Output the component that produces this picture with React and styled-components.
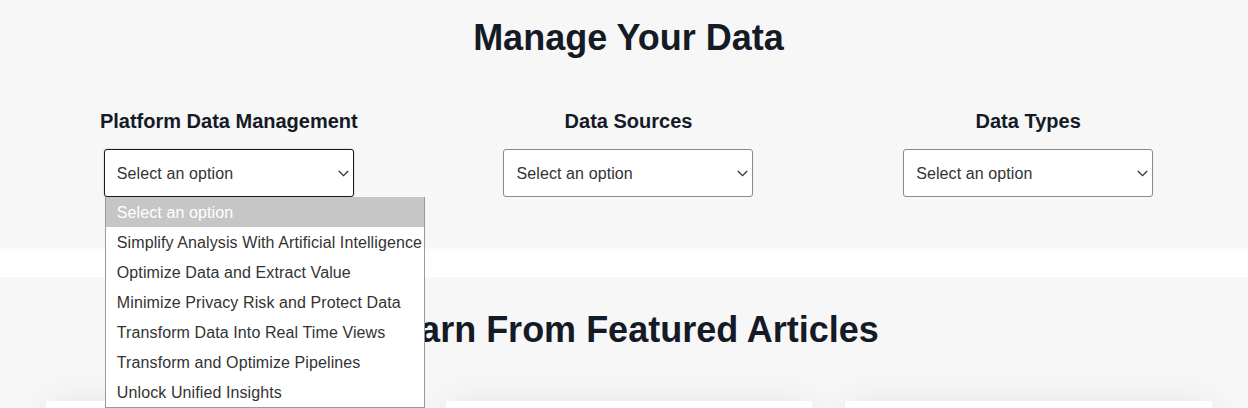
import React from "react";
import styled, { createGlobalStyle } from "styled-components";

const GlobalStyle = createGlobalStyle`
  html, body { margin: 0; padding: 0; background: #ffffff; }
  body { font-family: "Liberation Sans", Arial, sans-serif; }
  * { box-sizing: border-box; }
`;

const Page = styled.div`
  width: 100%;
  min-height: 408px;
  background: #ffffff;
  overflow: hidden;
`;

const Section = styled.section`
  background: #f7f7f7;
  padding: ${(p) => p.$pad};
  box-shadow: ${(p) => (p.$shadow ? "0 2px 4px rgba(0,0,0,0.035)" : "none")};
  position: relative;
  z-index: ${(p) => (p.$top ? 2 : 1)};
`;

const Gap = styled.div`
  height: 30px;
  background: #ffffff;
`;

const Title = styled.h2`
  margin: 0;
  text-align: center;
  font-size: 36px;
  font-weight: 700;
  line-height: normal;
  color: #141a26;
`;

const FilterGrid = styled.div`
  display: grid;
  grid-template-columns: repeat(3, 1fr);
  margin-top: 51px;
`;

const FilterColumn = styled.div`
  display: flex;
  flex-direction: column;
  align-items: center;
`;

const Label = styled.label`
  font-size: 20px;
  font-weight: 700;
  line-height: 23px;
  color: #141a26;
  margin-bottom: 16px;
`;

const SelectWrap = styled.div`
  position: relative;
  width: 250px;
  height: 48px;
`;

const Select = styled.select`
  appearance: none;
  -webkit-appearance: none;
  width: 100%;
  height: 100%;
  margin: 0;
  padding: 0 28px 0 12px;
  font-family: "Liberation Sans", Arial, sans-serif;
  font-size: 16px;
  letter-spacing: 0.1px;
  color: #333333;
  background: #ffffff;
  border: 1px solid ${(p) => (p.$open ? "#1a1a1a" : "#8a8a8a")};
  border-radius: 3px;
  box-shadow: ${(p) => (p.$open ? "0 0 2px rgba(0,0,0,0.25)" : "none")};
  outline: none;
`;

const Chevron = styled.svg`
  position: absolute;
  right: 5px;
  top: 21px;
  width: 11px;
  height: 7px;
  pointer-events: none;
`;

const OptionList = styled.ul`
  position: absolute;
  left: 1px;
  top: 48px;
  width: 320px;
  margin: 0;
  padding: 0;
  list-style: none;
  background: #ffffff;
  border: 1px solid #9a9a9a;
  border-top: none;
  z-index: 10;
`;

const OptionItem = styled.li`
  height: 30px;
  line-height: 32px;
  padding: 0 0 0 11px;
  font-size: 16px;
  letter-spacing: 0.1px;
  white-space: nowrap;
  overflow: hidden;
  color: ${(p) => (p.$active ? "#ffffff" : "#333333")};
  background: ${(p) => (p.$active ? "#c6c6c6" : "#ffffff")};
`;

const CardGrid = styled.div`
  display: grid;
  grid-template-columns: repeat(3, 1fr);
  gap: 33px;
  padding: 0 16px 0 17px;
  margin-top: 50px;
`;

const Card = styled.div`
  height: 220px;
  background: #ffffff;
  box-shadow: 0 0 32px rgba(0, 0, 0, 0.07);
`;

const options = [
  "Select an option",
  "Simplify Analysis With Artificial Intelligence",
  "Optimize Data and Extract Value",
  "Minimize Privacy Risk and Protect Data",
  "Transform Data Into Real Time Views",
  "Transform and Optimize Pipelines",
  "Unlock Unified Insights",
];

const filters = [
  { label: "Platform Data Management", open: true },
  { label: "Data Sources", open: false },
  { label: "Data Types", open: false },
];

function ChevronIcon() {
  return (
    <Chevron viewBox="0 0 11 7" fill="none">
      <path d="M0.8 1 L5.5 5.7 L10.2 1" stroke="#333333" strokeWidth="1.3" />
    </Chevron>
  );
}

export default function App() {
  return (
    <Page>
      <GlobalStyle />
      <Section $pad="17px 20px 50px 29px" $shadow $top>
        <Title>Manage Your Data</Title>
        <FilterGrid>
          {filters.map((f) => (
            <FilterColumn key={f.label}>
              <Label>{f.label}</Label>
              <SelectWrap>
                <Select $open={f.open} defaultValue="">
                  <option value="">Select an option</option>
                  {options.slice(1).map((o) => (
                    <option key={o} value={o}>
                      {o}
                    </option>
                  ))}
                </Select>
                <ChevronIcon />
                {f.open && (
                  <OptionList>
                    {options.map((o, i) => (
                      <OptionItem key={o} $active={i === 0}>
                        {o}
                      </OptionItem>
                    ))}
                  </OptionList>
                )}
              </SelectWrap>
            </FilterColumn>
          ))}
        </FilterGrid>
      </Section>
      <Gap />
      <Section $pad="32px 20px 0 29px">
        <Title>Learn From Featured Articles</Title>
        <CardGrid>
          <Card />
          <Card />
          <Card />
        </CardGrid>
      </Section>
    </Page>
  );
}
